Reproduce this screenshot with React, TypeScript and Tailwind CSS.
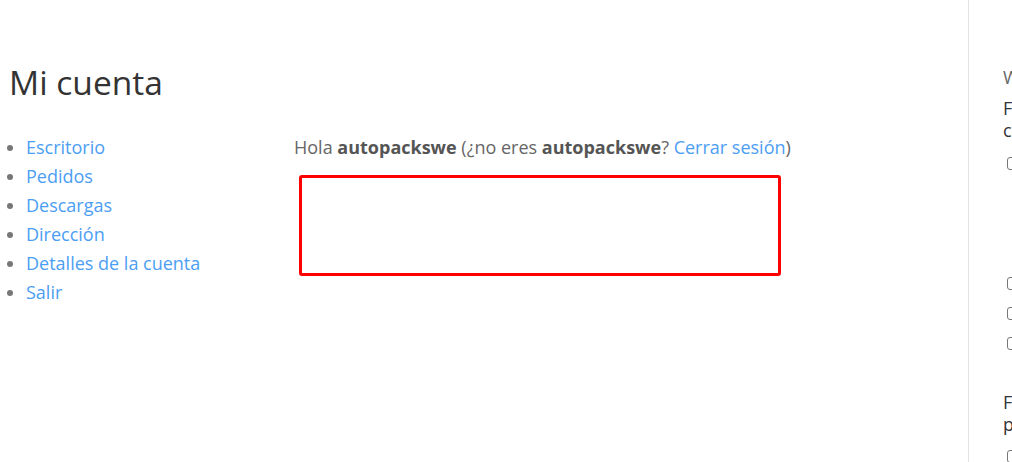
const navItems = ["Escritorio", "Pedidos", "Descargas", "Dirección", "Detalles de la cuenta", "Salir"];

function Check({ label }: { label: string }) {
  return (
    <label className="flex items-start gap-2 pl-[4px]">
      <span className="mt-[4px] inline-block h-[13px] w-[13px] shrink-0 rounded-[3px] border border-[#767676] bg-white" />
      <span>{label}</span>
    </label>
  );
}

export default function App() {
  return (
    <div
      className="flex h-[462px] w-[1012px] overflow-hidden bg-white"
      style={{ fontFamily: '"Open Sans", "Noto Sans", sans-serif' }}
    >
      {/* main */}
      <div className="w-[968px] shrink-0 pl-[9px] pt-[62px]">
        <h1 className="text-[33.5px] leading-[1.2] font-normal text-[#333]">Mi cuenta</h1>

        <div className="mt-[31px] flex">
          {/* nav */}
          <ul className="w-[285px] shrink-0 list-disc pl-[17px] text-[18px] leading-[29px] marker:text-[#777]">
            {navItems.map((item) => (
              <li key={item}>
                <a href="#" className="text-[#4b9ef3]">
                  {item}
                </a>
              </li>
            ))}
          </ul>

          {/* content */}
          <div className="flex-1">
            <p className="text-[18px] leading-[29px] text-[#666] whitespace-nowrap">
              Hola <strong className="font-bold text-[#555]">autopackswe</strong> (¿no eres{" "}
              <strong className="font-bold text-[#555]">autopackswe</strong>?{" "}
              <a href="#" className="text-[#4b9ef3]">
                Cerrar sesión
              </a>
              )
            </p>
            <div className="mt-[13px] ml-[5px] h-[101px] w-[482px] rounded-[3px] border-[3px] border-[#ff0000]" />
          </div>
        </div>
      </div>

      {/* sidebar */}
      <aside className="w-[300px] shrink-0 border-l border-[#e3e3e3] pl-[34px] pt-[66px] text-[18px] leading-[22px] text-[#333]">
        <div className="text-[18px] text-[#666]">Widgets</div>
        <div className="mt-[9px]">
          <div>Filtrar por</div>
          <div>categoría</div>
        </div>
        <div className="mt-[12px] flex flex-col">
          <div className="h-[120px]">
            <Check label="Accesorios" />
          </div>
          <div className="h-[30px]">
            <Check label="Baterías" />
          </div>
          <div className="h-[30px]">
            <Check label="Cargadores" />
          </div>
          <div className="h-[30px]">
            <Check label="Cables" />
          </div>
        </div>
        <div className="mt-[28px]">
          <div>Filtrar por</div>
          <div>precio</div>
        </div>
        <div className="mt-[11px]">
          <Check label="Ofertas" />
        </div>
      </aside>
    </div>
  );
}
